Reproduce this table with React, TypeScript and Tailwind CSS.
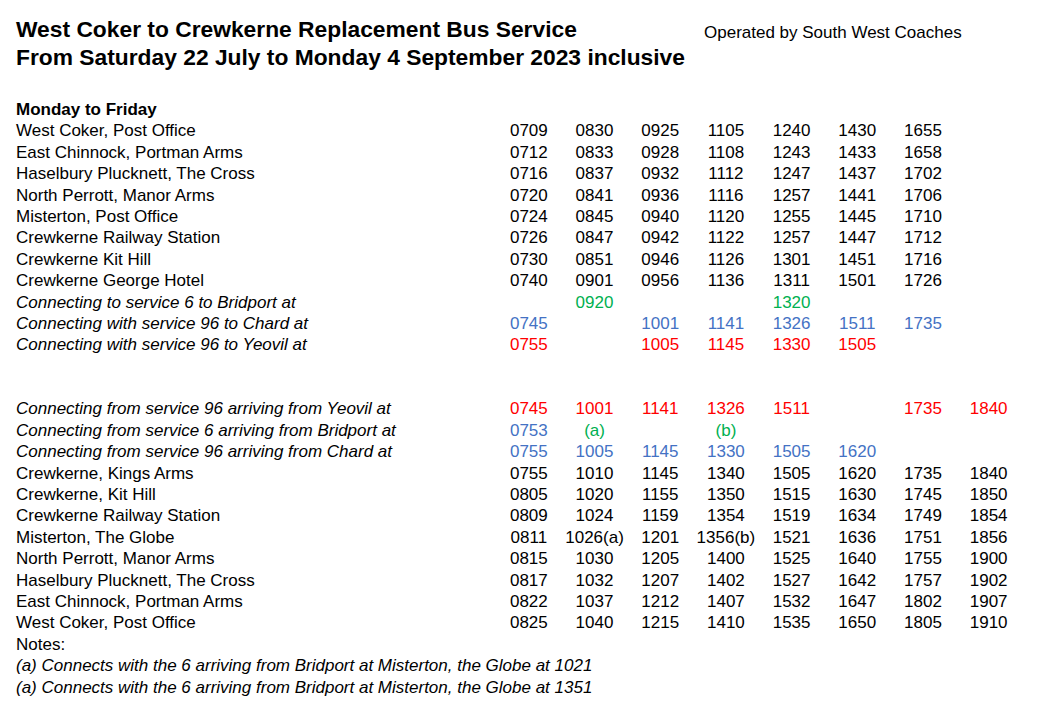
import React from "react";

type Cell = string | [string, string];

const black = "text-black";
const green = "text-[#00b050]";
const blue = "text-[#4472c4]";
const red = "text-[#ff0000]";

type Row = {
  label: string;
  italic?: boolean;
  color?: string;
  times: Cell[];
};

const outbound: Row[] = [
  { label: "West Coker, Post Office", times: ["0709", "0830", "0925", "1105", "1240", "1430", "1655"] },
  { label: "East Chinnock, Portman Arms", times: ["0712", "0833", "0928", "1108", "1243", "1433", "1658"] },
  { label: "Haselbury Plucknett, The Cross", times: ["0716", "0837", "0932", "1112", "1247", "1437", "1702"] },
  { label: "North Perrott, Manor Arms", times: ["0720", "0841", "0936", "1116", "1257", "1441", "1706"] },
  { label: "Misterton, Post Office", times: ["0724", "0845", "0940", "1120", "1255", "1445", "1710"] },
  { label: "Crewkerne Railway Station", times: ["0726", "0847", "0942", "1122", "1257", "1447", "1712"] },
  { label: "Crewkerne Kit Hill", times: ["0730", "0851", "0946", "1126", "1301", "1451", "1716"] },
  { label: "Crewkerne George Hotel", times: ["0740", "0901", "0956", "1136", "1311", "1501", "1726"] },
  { label: "Connecting to service 6 to Bridport at", italic: true, color: green, times: ["", "0920", "", "", "1320"] },
  { label: "Connecting with service 96 to Chard at", italic: true, color: blue, times: ["0745", "", "1001", "1141", "1326", "1511", "1735"] },
  { label: "Connecting with service 96 to Yeovil at", italic: true, color: red, times: ["0755", "", "1005", "1145", "1330", "1505"] },
];

const inbound: Row[] = [
  { label: "Connecting from service 96 arriving from Yeovil at", italic: true, color: red, times: ["0745", "1001", "1141", "1326", "1511", "", "1735", "1840"] },
  { label: "Connecting from service 6 arriving from Bridport at", italic: true, color: green, times: [["0753", blue], "(a)", "", "(b)"] },
  { label: "Connecting from service 96 arriving from Chard at", italic: true, color: blue, times: ["0755", "1005", "1145", "1330", "1505", "1620"] },
  { label: "Crewkerne, Kings Arms", times: ["0755", "1010", "1145", "1340", "1505", "1620", "1735", "1840"] },
  { label: "Crewkerne, Kit Hill", times: ["0805", "1020", "1155", "1350", "1515", "1630", "1745", "1850"] },
  { label: "Crewkerne Railway Station", times: ["0809", "1024", "1159", "1354", "1519", "1634", "1749", "1854"] },
  { label: "Misterton, The Globe", times: ["0811", "1026(a)", "1201", "1356(b)", "1521", "1636", "1751", "1856"] },
  { label: "North Perrott, Manor Arms", times: ["0815", "1030", "1205", "1400", "1525", "1640", "1755", "1900"] },
  { label: "Haselbury Plucknett, The Cross", times: ["0817", "1032", "1207", "1402", "1527", "1642", "1757", "1902"] },
  { label: "East Chinnock, Portman Arms", times: ["0822", "1037", "1212", "1407", "1532", "1647", "1802", "1907"] },
  { label: "West Coker, Post Office", times: ["0825", "1040", "1215", "1410", "1535", "1650", "1805", "1910"] },
];

function TimeRow({ row }: { row: Row }) {
  const cells: Cell[] = [...row.times];
  while (cells.length < 8) cells.push("");
  return (
    <div className="grid grid-cols-[480px_repeat(8,65.7px)] h-[21.4px] leading-[21.4px]">
      <div className={row.italic ? "italic" : ""}>{row.label}</div>
      {cells.map((c, i) => {
        const text = Array.isArray(c) ? c[0] : c;
        const color = Array.isArray(c) ? c[1] : row.color ?? black;
        return (
          <div key={i} className={`text-center ${color}`}>
            {text}
          </div>
        );
      })}
    </div>
  );
}

export default function App() {
  return (
    <div className="w-[1051px] h-[716px] bg-white text-black pl-4 pt-[15px] font-['Liberation_Sans',Arial,sans-serif] text-[17px] overflow-hidden">
      <div className="flex flex-row">
        <div className="w-[688px] font-bold text-[22.8px] leading-[28px]">
          <div>West Coker to Crewkerne Replacement Bus Service</div>
          <div>From Saturday 22 July to Monday 4 September 2023 inclusive</div>
        </div>
        <div className="mt-[7px] leading-[21.4px]">Operated by South West Coaches</div>
      </div>

      <div className="mt-[28px]">
        <div className="h-[21.4px] leading-[21.4px] font-bold">Monday to Friday</div>
        {outbound.map((r, i) => (
          <TimeRow key={"o" + i} row={r} />
        ))}
        <div className="h-[42.8px]" />
        {inbound.map((r, i) => (
          <TimeRow key={"i" + i} row={r} />
        ))}
        <div className="h-[21.4px] leading-[21.4px]">Notes:</div>
        <div className="h-[21.4px] leading-[21.4px] italic">
          (a) Connects with the 6 arriving from Bridport at Misterton, the Globe at 1021
        </div>
        <div className="h-[21.4px] leading-[21.4px] italic">
          (a) Connects with the 6 arriving from Bridport at Misterton, the Globe at 1351
        </div>
      </div>
    </div>
  );
}
